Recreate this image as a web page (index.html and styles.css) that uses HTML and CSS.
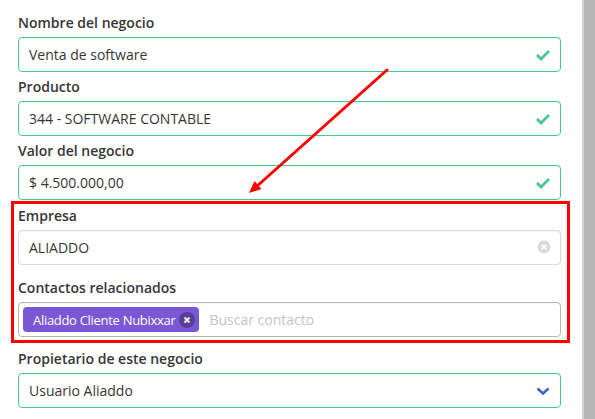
FILE: index.html
```html
<!DOCTYPE html>
<html lang="es">

<head>
    <meta charset="UTF-8">
    <meta name="viewport" content="width=device-width, initial-scale=1.0">
    <title>Negocio</title>
    <link rel="stylesheet" href="styles.css">
</head>

<body>
    <div class="page">
        <main class="form">
            <div class="field">
                <label class="label">Nombre del negocio</label>
                <div class="control">
                    <div class="input is-success">Venta de software</div>
                    <svg class="icon-right" width="16" height="16" viewBox="0 0 16 16">
                        <polyline points="2,8 6,12 14,4" fill="none" stroke="#48c78e" stroke-width="2.8" />
                    </svg>
                </div>
            </div>
            <div class="field">
                <label class="label">Producto</label>
                <div class="control">
                    <div class="input is-success">344 - SOFTWARE CONTABLE</div>
                    <svg class="icon-right" width="16" height="16" viewBox="0 0 16 16">
                        <polyline points="2,8 6,12 14,4" fill="none" stroke="#48c78e" stroke-width="2.8" />
                    </svg>
                </div>
            </div>
            <div class="field field-valor">
                <label class="label">Valor del negocio</label>
                <div class="control">
                    <div class="input is-success">$ 4.500.000,00</div>
                    <svg class="icon-right" width="16" height="16" viewBox="0 0 16 16">
                        <polyline points="2,8 6,12 14,4" fill="none" stroke="#48c78e" stroke-width="2.8" />
                    </svg>
                </div>
            </div>
            <div class="field is-spaced">
                <label class="label">Empresa</label>
                <div class="control">
                    <div class="input">ALIADDO</div>
                    <svg class="icon-right" width="14" height="14" viewBox="0 0 14 14">
                        <circle cx="7" cy="7" r="6.5" fill="#dbdbdb" />
                        <path d="M4.8 4.8 L9.2 9.2 M9.2 4.8 L4.8 9.2" stroke="#fff" stroke-width="1.8" />
                    </svg>
                </div>
            </div>
            <div class="field is-spaced-sm">
                <label class="label">Contactos relacionados</label>
                <div class="control">
                    <div class="input taginput">
                        <span class="tag">Aliaddo Cliente Nubixxar
                            <span class="tag-delete">
                                <svg width="8" height="8" viewBox="0 0 8 8">
                                    <path d="M1.5 1.5 L6.5 6.5 M6.5 1.5 L1.5 6.5" stroke="#fff" stroke-width="1.8" />
                                </svg>
                            </span>
                        </span>
                        <span class="placeholder">Buscar contacto</span>
                    </div>
                </div>
            </div>
            <div class="field field-last">
                <label class="label">Propietario de este negocio</label>
                <div class="control">
                    <div class="input is-success">Usuario Aliaddo</div>
                    <svg class="icon-right" width="16" height="16" viewBox="0 0 16 16">
                        <polyline points="2.5,5.5 8,10.5 13.5,5.5" fill="none" stroke="#485fc7" stroke-width="2.6" />
                    </svg>
                </div>
            </div>
            <div class="field">
                <label class="label">Presupuesto</label>
            </div>
        </main>
        <div class="scrollbar"></div>

        <!-- annotation drawn over the screenshot -->
        <div class="highlight"></div>
        <svg class="arrow" width="595" height="419" viewBox="0 0 595 419">
            <line x1="387" y1="70" x2="256" y2="187" stroke="#ff0000" stroke-width="3" stroke-linecap="round" />
            <polygon points="249,193 261.5,189 254.5,181" fill="#ff0000" />
        </svg>
    </div>
</body>

</html>
```

FILE: styles.css
```css
body {
    font-family: "Open Sans", sans-serif;
    background-color: #fff;
    color: #363636;
    margin: 0;
    padding: 0;
}

.page {
    position: relative;
    display: flex;
    width: 595px;
    height: 419px;
    overflow: hidden;
}

.form {
    width: 582px;
    box-sizing: border-box;
    padding: 13px 21px 0 18px;
}

.scrollbar {
    width: 11px;
    background: #b5b5b5;
    border-left: 2px solid #d4d4d4;
}

.field {
    margin-bottom: 5px;
}

.field.field-valor {
    margin-bottom: 6px;
}

.field.is-spaced {
    margin-bottom: 13px;
}

.field.is-spaced-sm {
    margin-bottom: 12px;
}

.field.field-last {
    margin-bottom: 6px;
}

.label {
    display: block;
    font-size: 14px;
    font-weight: 600;
    line-height: 20px;
    margin-bottom: 4px;
}

.control {
    position: relative;
}

.input {
    height: 35px;
    box-sizing: border-box;
    border: 1px solid #dbdbdb;
    border-radius: 4px;
    padding: 0 10px;
    display: flex;
    align-items: center;
    font-size: 14px;
    box-shadow: inset 0 0.0625em 0.125em rgba(10, 10, 10, 0.05);
}

.input.is-success {
    border-color: #48c78e;
}

.icon-right {
    position: absolute;
    right: 10px;
    top: 10px;
}

.taginput {
    border-color: #b5b5b5;
    padding: 0 4px;
    gap: 10px;
}

.tag {
    display: flex;
    align-items: center;
    height: 25px;
    padding: 0 4px 0 10px;
    border-radius: 4px;
    background: #7957d5;
    color: #fff;
    font-size: 13px;
    letter-spacing: -0.3px;
}

.tag-delete {
    display: flex;
    align-items: center;
    justify-content: center;
    width: 16px;
    height: 16px;
    margin-left: 4px;
    border-radius: 50%;
    background: rgba(10, 10, 10, 0.3);
}

.placeholder {
    color: #c4c4c4;
}

.highlight {
    position: absolute;
    left: 11px;
    top: 201px;
    width: 553px;
    height: 136px;
    border: 3px solid #ff0000;
}

.arrow {
    position: absolute;
    left: 0;
    top: 0;
}
```
